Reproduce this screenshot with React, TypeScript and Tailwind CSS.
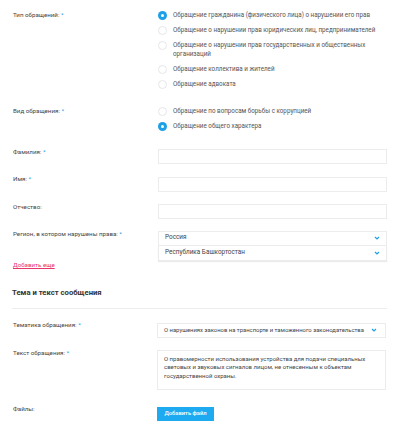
const font = { fontFamily: "Roboto, 'Noto Sans', sans-serif" }

function Req() {
  return <span className="text-[#1ea0e6]"> *</span>
}

function Radio({ checked, children }: { checked?: boolean; children: React.ReactNode }) {
  return (
    <div className="flex items-start gap-[6px]">
      {checked ? (
        <span className="w-[9px] h-[9px] shrink-0 rounded-full bg-[#1ea0e6] flex items-center justify-center">
          <span className="w-[3px] h-[3px] rounded-full bg-white" />
        </span>
      ) : (
        <span className="w-[9px] h-[9px] shrink-0 rounded-full border border-[#e6e6e6] bg-white" />
      )}
      <span className="text-[6.28px] leading-[9px] text-[#555]">{children}</span>
    </div>
  )
}

function Chevron() {
  return (
    <svg width="6" height="4" viewBox="0 0 6 4" className="shrink-0">
      <path d="M1 1 L3 3 L5 1" fill="none" stroke="#1ea0e6" strokeWidth="1.2" />
    </svg>
  )
}

function Select({ value, className = "", textSize = "text-[6.2px]" }: { value: string; className?: string; textSize?: string }) {
  return (
    <div className={`h-[15px] border border-[#ececec] bg-white flex items-center justify-between pl-[6px] pr-[6px] ${className}`}>
      <span className={`${textSize} whitespace-nowrap text-[#444]`}>{value}</span>
      <Chevron />
    </div>
  )
}

function Label({ children }: { children: React.ReactNode }) {
  return <div className="w-[145px] shrink-0 text-[6.2px] leading-[9px] text-[#444]">{children}</div>
}

export default function App() {
  return (
    <div className="w-[400px] h-[432px] bg-white overflow-hidden" style={font}>
      <div className="pl-[13px] pr-[13px] pt-[11px]">
        {/* Тип обращений */}
        <div className="flex">
          <Label>
            Тип обращений:<Req />
          </Label>
          <div className="flex flex-col gap-[6px]">
            <Radio checked>Обращение гражданина (физического лица) о нарушении его прав</Radio>
            <Radio>Обращение о нарушении прав юридических лиц, предпринимателей</Radio>
            <Radio>
              Обращение о нарушении прав государственных и общественных
              <br />
              организаций
            </Radio>
            <Radio>Обращение коллектива и жителей</Radio>
            <Radio>Обращение адвоката</Radio>
          </div>
        </div>

        {/* Вид обращения */}
        <div className="flex mt-[17.5px]">
          <Label>
            Вид обращения:<Req />
          </Label>
          <div className="flex flex-col gap-[6.5px]">
            <Radio>Обращение по вопросам борьбы с коррупцией</Radio>
            <Radio checked>Обращение общего характера</Radio>
          </div>
        </div>

        {/* ФИО */}
        <div className="flex mt-[17px]">
          <Label>
            Фамилия:<Req />
          </Label>
          <div className="flex-1 h-[15px] mt-[1px] border border-[#ececec]" />
        </div>
        <div className="flex mt-[11px]">
          <Label>
            Имя:<Req />
          </Label>
          <div className="flex-1 h-[15px] mt-[1.5px] border border-[#ececec]" />
        </div>
        <div className="flex mt-[11px]">
          <Label>Отчество:</Label>
          <div className="flex-1 h-[15px] mt-[1px] border border-[#ececec]" />
        </div>

        {/* Регион */}
        <div className="flex mt-[11px]">
          <div className="w-[145px] shrink-0">
            <Label>
              Регион, в котором нарушены права:<Req />
            </Label>
            <a className="block mt-[22.5px] text-[6.2px] leading-[9px] text-[#e8336b] underline">Добавить еще</a>
          </div>
          <div className="flex-1 mt-[1px] flex flex-col">
            <Select value="Россия" textSize="text-[6.4px]" />
            <Select value="Республика Башкортостан" textSize="text-[6.4px]" className="border-t-0 shadow-[0_1px_1px_rgba(0,0,0,0.08)] border-[#e2e2e2]" />
          </div>
        </div>

        {/* Тема и текст сообщения */}
        <div className="mt-[17.5px] -ml-[1px] text-[7.7px] font-bold leading-[10px] text-[#333]">
          Тема и текст сообщения
        </div>
        <div className="mt-[10.5px] -ml-[1px] h-px bg-[#ededed]" />

        <div className="flex mt-[12px]">
          <Label>
            Тематика обращения:<Req />
          </Label>
          <Select
            value="О нарушениях законов на транспорте и таможенного законодательства"
            textSize="text-[5.9px]"
            className="flex-1 mt-[1.5px] -ml-[1px] mr-[1px] pr-[8px]"
          />
        </div>

        <div className="flex mt-[11px]">
          <Label>
            Текст обращения:<Req />
          </Label>
          <div className="flex-1 h-[40px] mt-[1px] -ml-[1px] mr-[1px] border border-[#ececec] px-[6px] pt-[4px] text-[6px] leading-[8.5px] text-[#444]">
            О правомерности использования устройства для подачи специальных световых и звуковых сигналов лицом, не отнесенным к объектам государственной охраны.
          </div>
        </div>

        <div className="flex mt-[15.5px]">
          <Label>Файлы:</Label>
          <button className="mt-[1.5px] -ml-[1px] w-[57px] h-[14px] bg-[#1eaaf1] text-white text-[5.8px] font-medium flex items-center justify-center">
            Добавить файл
          </button>
        </div>
      </div>
    </div>
  )
}
